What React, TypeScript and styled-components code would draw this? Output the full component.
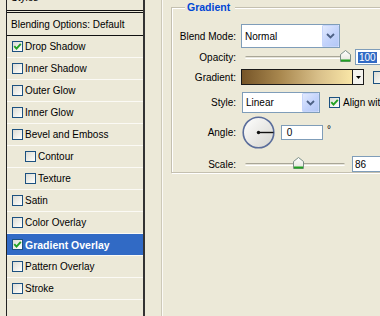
import styled, { createGlobalStyle } from "styled-components";

interface Effect {
  name: string;
  checked?: boolean;
  indent?: boolean;
  selected?: boolean;
}

const effects: Effect[] = [
  { name: "Drop Shadow", checked: true },
  { name: "Inner Shadow" },
  { name: "Outer Glow" },
  { name: "Inner Glow" },
  { name: "Bevel and Emboss" },
  { name: "Contour", indent: true },
  { name: "Texture", indent: true },
  { name: "Satin" },
  { name: "Color Overlay" },
  { name: "Gradient Overlay", checked: true, selected: true },
  { name: "Pattern Overlay" },
  { name: "Stroke" },
];

const GlobalStyle = createGlobalStyle`
  html, body {
    margin: 0;
    padding: 0;
    background: #ece9d8;
  }
  body {
    font-family: "Liberation Sans", Arial, sans-serif;
    font-size: 10px;
    color: #000;
  }
`;

const Window = styled.div`
  width: 380px;
  height: 316px;
  overflow: hidden;
  display: flex;
  padding-left: 6px;
  box-sizing: border-box;
  background: #ece9d8;
`;

const StylesPanel = styled.div`
  width: 139px;
  flex: none;
  box-sizing: border-box;
  border-left: 1px solid #222;
  border-right: 2px solid #333;
  display: flex;
  flex-direction: column;
`;

const StylesHeader = styled.div`
  height: 10px;
  overflow: hidden;
  span {
    display: block;
    margin-top: -8px;
    line-height: 12px;
    padding-left: 4px;
  }
`;

const DoubleRule = styled.div`
  height: 1px;
  border-top: 1px solid #111;
  border-bottom: 1px solid #111;
`;

const BlendingRow = styled.div`
  height: 22px;
  display: flex;
  align-items: center;
  padding-left: 4px;
  border-bottom: 1px solid #111;
`;

const EffectRow = styled.div<{ $indent?: boolean; $selected?: boolean }>`
  height: 21px;
  flex: none;
  display: flex;
  align-items: center;
  gap: 2px;
  padding-left: ${(p) => (p.$indent ? 18 : 5)}px;
  border-bottom: 1px solid #fbfaf5;
  background: ${(p) => (p.$selected ? "#316ac5" : "transparent")};
  color: ${(p) => (p.$selected ? "#fff" : "#000")};
  font-weight: ${(p) => (p.$selected ? "bold" : "normal")};
  font-size: ${(p) => (p.$selected ? "10.5px" : "10px")};
  white-space: nowrap;
`;

const Box = styled.span<{ $size?: number }>`
  width: ${(p) => p.$size ?? 11}px;
  height: ${(p) => p.$size ?? 11}px;
  flex: none;
  box-sizing: border-box;
  border: 1px solid #1c5180;
  background: linear-gradient(135deg, #dcdcd5 0%, #f3f3ee 65%, #fff 100%);
  display: inline-flex;
  align-items: center;
  justify-content: center;
`;

const Divider = styled.div`
  width: 1px;
  flex: none;
  margin-left: 16px;
  background: #cdc9b8;
  border-right: 1px solid #fbfaf6;
`;

const Content = styled.div`
  flex: 1;
  padding: 7px 0 0 8px;
`;

const GroupBox = styled.div`
  position: relative;
  width: 260px;
  height: 166px;
  box-sizing: border-box;
  border: 1px solid #c4c0b0;
  box-shadow: inset 1px 1px 0 #fff, 1px 1px 0 #fff;
  padding-top: 8px;
  display: flex;
  flex-direction: column;
`;

const Legend = styled.span`
  position: absolute;
  top: -7px;
  left: 13px;
  padding: 0 5px 0 2px;
  line-height: 13px;
  background: #ece9d8;
  color: #0046d5;
  font-weight: bold;
  font-size: 10.5px;
`;

const Row = styled.div<{ $h: number; $mt: number }>`
  display: grid;
  grid-template-columns: 64px auto;
  align-items: center;
  height: ${(p) => p.$h}px;
  margin-top: ${(p) => p.$mt}px;
`;

const Label = styled.label`
  text-align: right;
  white-space: nowrap;
`;

const Controls = styled.div`
  display: flex;
  align-items: center;
  white-space: nowrap;
`;

const Select = styled.div<{ $w: number; $h: number; $ml: number }>`
  width: ${(p) => p.$w}px;
  height: ${(p) => p.$h}px;
  margin-left: ${(p) => p.$ml}px;
  box-sizing: border-box;
  border: 1px solid #7f9db9;
  background: #fff;
  display: flex;
  align-items: center;
  span {
    flex: 1;
    padding-left: 3px;
  }
`;

const SelectButton = styled.div`
  width: 17px;
  height: 100%;
  box-sizing: border-box;
  border: 1px solid #c6d5fb;
  border-radius: 1px;
  background: linear-gradient(135deg, #e2eafe 0%, #c3d3fb 55%, #b4c8f6 100%);
  display: flex;
  align-items: center;
  justify-content: center;
`;

const Slider = styled.div<{ $ml: number }>`
  position: relative;
  width: 100px;
  height: 3px;
  margin-left: ${(p) => p.$ml}px;
  border-radius: 2px;
  background: linear-gradient(#a9a697 0 1px, #e6e4d9 1px 2px, #fff 2px);
`;

const Thumb = styled.svg`
  position: absolute;
  top: -6px;
`;

const TextField = styled.div<{ $w: number; $h: number; $ml: number }>`
  width: ${(p) => p.$w}px;
  height: ${(p) => p.$h}px;
  margin-left: ${(p) => p.$ml}px;
  box-sizing: border-box;
  border: 1px solid #7f9db9;
  background: #fff;
  display: flex;
  align-items: center;
  padding-left: 2px;
  flex: none;
`;

const Selection = styled.span`
  background: #316ac5;
  color: #fff;
  padding: 0 1px;
  line-height: 11px;
`;

const GradientField = styled.div`
  width: 123px;
  height: 16px;
  margin-left: 5px;
  box-sizing: border-box;
  border: 1px solid #1a1a1a;
  display: flex;
`;

const Swatch = styled.div`
  flex: 1;
  background: linear-gradient(90deg, #765528 0%, #a9884f 35%, #d9c08a 70%, #f9e6a7 100%);
`;

const SwatchMenu = styled.div`
  width: 10px;
  border-left: 1px solid #1a1a1a;
  background: #f4f3ee;
  display: flex;
  align-items: center;
  justify-content: center;
`;

const Spaced = styled.span<{ $ml: number }>`
  margin-left: ${(p) => p.$ml}px;
  display: inline-flex;
`;

const Dial = styled.svg`
  margin-left: 6px;
  flex: none;
`;

const Degree = styled.span`
  margin-left: 4px;
  align-self: flex-start;
  margin-top: 9px;
  line-height: 10px;
`;

const Check = () => (
  <svg width="9" height="9" viewBox="0 0 9 9">
    <path d="M1.3 4.2 L3.5 6.6 L7.8 1.8" fill="none" stroke="#21a121" strokeWidth="1.9" />
  </svg>
);

const CheckBox = ({ checked, size }: { checked?: boolean; size?: number }) => (
  <Box $size={size}>{checked && <Check />}</Box>
);

const Chevron = () => (
  <svg width="9" height="6" viewBox="0 0 9 6">
    <path d="M1 1 L4.5 4.5 L8 1" fill="none" stroke="#4d6185" strokeWidth="1.8" />
  </svg>
);

const SliderThumb = ({ position }: { position: number }) => (
  <Thumb width="11" height="12" viewBox="0 0 11 12" style={{ left: position * 95 }}>
    <defs>
      <linearGradient id="thumbFill" x1="0" y1="0" x2="0" y2="1">
        <stop offset="0" stopColor="#ffffff" />
        <stop offset="1" stopColor="#e4e4dc" />
      </linearGradient>
    </defs>
    <path d="M0.5 4.5 L5.5 0.5 L10.5 4.5 V11.5 H0.5 Z" fill="url(#thumbFill)" stroke="#7b8e87" />
    <rect x="1" y="9.5" width="9" height="2" fill="#21a121" />
  </Thumb>
);

const AngleDial = () => (
  <Dial width="33" height="33" viewBox="0 0 33 33">
    <defs>
      <linearGradient id="dialFill" x1="0" y1="0" x2="1" y2="1">
        <stop offset="0" stopColor="#ffffff" />
        <stop offset="1" stopColor="#d6d5cf" />
      </linearGradient>
    </defs>
    <circle cx="16.5" cy="16.5" r="15.3" fill="url(#dialFill)" stroke="#5a6d9b" strokeWidth="1.6" />
    <line x1="16.5" y1="16.5" x2="31.5" y2="16.5" stroke="#111" strokeWidth="1.4" />
    <circle cx="16.5" cy="16.5" r="1.7" fill="#111" />
  </Dial>
);

export default function App() {
  return (
    <>
      <GlobalStyle />
      <Window>
        <StylesPanel>
          <StylesHeader>
            <span>Styles</span>
          </StylesHeader>
          <DoubleRule />
          <BlendingRow>Blending Options: Default</BlendingRow>
          {effects.map((effect) => (
            <EffectRow key={effect.name} $indent={effect.indent} $selected={effect.selected}>
              <CheckBox checked={effect.checked} />
              <span>{effect.name}</span>
            </EffectRow>
          ))}
        </StylesPanel>
        <Divider />
        <Content>
          <GroupBox>
            <Legend>Gradient</Legend>
            <Row $h={24} $mt={8}>
              <Label>Blend Mode:</Label>
              <Controls>
                <Select $w={99} $h={24} $ml={5}>
                  <span>Normal</span>
                  <SelectButton>
                    <Chevron />
                  </SelectButton>
                </Select>
              </Controls>
            </Row>
            <Row $h={18} $mt={1}>
              <Label>Opacity:</Label>
              <Controls>
                <Slider $ml={9}>
                  <SliderThumb position={1} />
                </Slider>
                <TextField $w={40} $h={16} $ml={10}>
                  <Selection>100</Selection>
                </TextField>
              </Controls>
            </Row>
            <Row $h={17} $mt={4}>
              <Label>Gradient:</Label>
              <Controls>
                <GradientField>
                  <Swatch />
                  <SwatchMenu>
                    <svg width="5" height="3" viewBox="0 0 5 3">
                      <path d="M0 0 H5 L2.5 3 Z" fill="#000" />
                    </svg>
                  </SwatchMenu>
                </GradientField>
                <Spaced $ml={9}>
                  <CheckBox size={13} />
                </Spaced>
              </Controls>
            </Row>
            <Row $h={21} $mt={7}>
              <Label>Style:</Label>
              <Controls>
                <Select $w={78} $h={21} $ml={6}>
                  <span>Linear</span>
                  <SelectButton>
                    <Chevron />
                  </SelectButton>
                </Select>
                <Spaced $ml={9}>
                  <CheckBox checked />
                </Spaced>
                <Spaced $ml={3}>Align with Layer</Spaced>
              </Controls>
            </Row>
            <Row $h={33} $mt={3}>
              <Label>Angle:</Label>
              <Controls>
                <AngleDial />
                <TextField $w={42} $h={15} $ml={6}>
                  <span>&nbsp;0</span>
                </TextField>
                <Degree>°</Degree>
              </Controls>
            </Row>
            <Row $h={17} $mt={7}>
              <Label>Scale:</Label>
              <Controls>
                <Slider $ml={9}>
                  <SliderThumb position={0.5} />
                </Slider>
                <TextField $w={40} $h={16} $ml={7}>
                  <span>86</span>
                </TextField>
              </Controls>
            </Row>
          </GroupBox>
        </Content>
      </Window>
    </>
  );
}
